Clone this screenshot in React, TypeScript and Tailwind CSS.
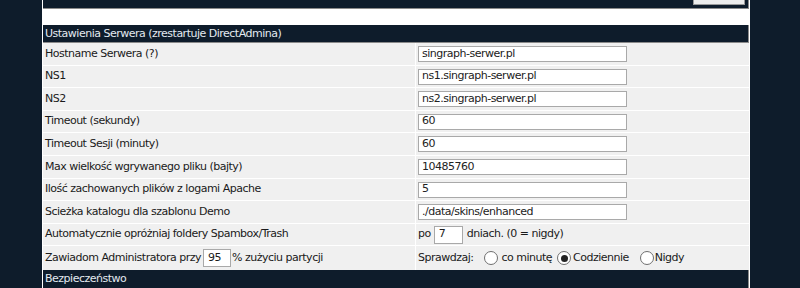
export default function App() {
  const rows: { label: string; value: string; h: string }[] = [
    { label: "Hostname Serwera (?)", value: "singraph-serwer.pl", h: "h-[23px]" },
    { label: "NS1", value: "ns1.singraph-serwer.pl", h: "h-[22px]" },
    { label: "NS2", value: "ns2.singraph-serwer.pl", h: "h-[23px]" },
    { label: "Timeout (sekundy)", value: "60", h: "h-[22px]" },
    { label: "Timeout Sesji (minuty)", value: "60", h: "h-[23px]" },
    { label: "Max wielkość wgrywanego pliku (bajty)", value: "10485760", h: "h-[23px]" },
    { label: "Ilość zachowanych plików z logami Apache", value: "5", h: "h-[22px]" },
    { label: "Scieżka katalogu dla szablonu Demo", value: "./data/skins/enhanced", h: "h-[23px]" },
  ];

  const Radio = ({ checked }: { checked?: boolean }) => (
    <span className="w-[14px] h-[14px] rounded-full border border-[#6f6f6f] bg-white flex items-center justify-center shrink-0">
      {checked && <span className="w-[7px] h-[7px] rounded-full bg-[#222]" />}
    </span>
  );

  return (
    <div
      className="w-[800px] h-[288px] overflow-hidden bg-[#0e1c2b] text-[11px] tracking-[-0.5px] text-[#1a1a1a]"
      style={{ fontFamily: '"DejaVu Sans", Verdana, sans-serif' }}
    >
      <div className="ml-[42px] w-[708px] bg-white pl-px pr-[1px]">
        {/* end of previous section */}
        <div className="h-[9px] bg-[#0e1c2b] border-b border-r border-[#8a8a8a] flex justify-end items-end overflow-hidden pr-[3px]">
          <div className="w-[52px] h-[16px] shrink-0 mb-[3px] bg-[#ececec] border border-[#9a9a9a]" />
        </div>
        <div className="h-[16px]" />

        <div className="h-[18px] bg-[#0e1c2b] border-b border-r border-[#8a8a8a] flex items-center pl-[2px] pt-px text-[#e3eaf0]">
          Ustawienia Serwera (zrestartuje DirectAdmina)
        </div>

        {rows.map((r) => (
          <div key={r.label} className={`${r.h} flex border-b border-white`}>
            <div className="w-[373px] bg-[#f0f0f0] border-r border-white flex items-center pl-[2px]">
              {r.label}
            </div>
            <div className="flex-1 bg-[#f0f0f0] flex items-center pl-[2px]">
              <div className="w-[209px] h-[16px] bg-white border border-[#a9a9a9] flex items-center pl-[3px] text-[#222]">
                {r.value}
              </div>
            </div>
          </div>
        ))}

        <div className="h-[22px] flex border-b border-white">
          <div className="w-[373px] bg-[#f0f0f0] border-r border-white flex items-center pl-[2px]">
            Automatycznie opróżniaj foldery Spambox/Trash
          </div>
          <div className="flex-1 bg-[#f0f0f0] flex items-center pl-[2px]">
            <span>po</span>
            <div className="ml-[3px] w-[29px] h-[18px] bg-white border border-[#a9a9a9] flex items-center pl-[4px]">
              7
            </div>
            <span className="ml-[4px]">dniach. (0 = nigdy)</span>
          </div>
        </div>

        <div className="h-[24px] flex">
          <div className="w-[373px] bg-[#f0f0f0] border-r border-white flex items-center pl-[2px]">
            <span>Zawiadom Administratora przy</span>
            <div className="ml-[2px] w-[28px] h-[18px] bg-white border border-[#a9a9a9] flex items-center pl-[4px]">
              95
            </div>
            <span className="ml-px">% zużyciu partycji</span>
          </div>
          <div className="flex-1 bg-[#f0f0f0] flex items-center pl-[2px]">
            <span>Sprawdzaj:</span>
            <span className="ml-[11px]"><Radio /></span>
            <span className="ml-[3px]">co minutę</span>
            <span className="ml-[5px]"><Radio checked /></span>
            <span className="ml-[2px]">Codziennie</span>
            <span className="ml-[11px]"><Radio /></span>
            <span className="ml-px">Nigdy</span>
          </div>
        </div>

        <div className="h-[18px] bg-[#0e1c2b] border-r border-[#8a8a8a] flex items-center pl-[2px] pt-px text-[#e3eaf0]">
          Bezpieczeństwo
        </div>
      </div>
    </div>
  );
}
